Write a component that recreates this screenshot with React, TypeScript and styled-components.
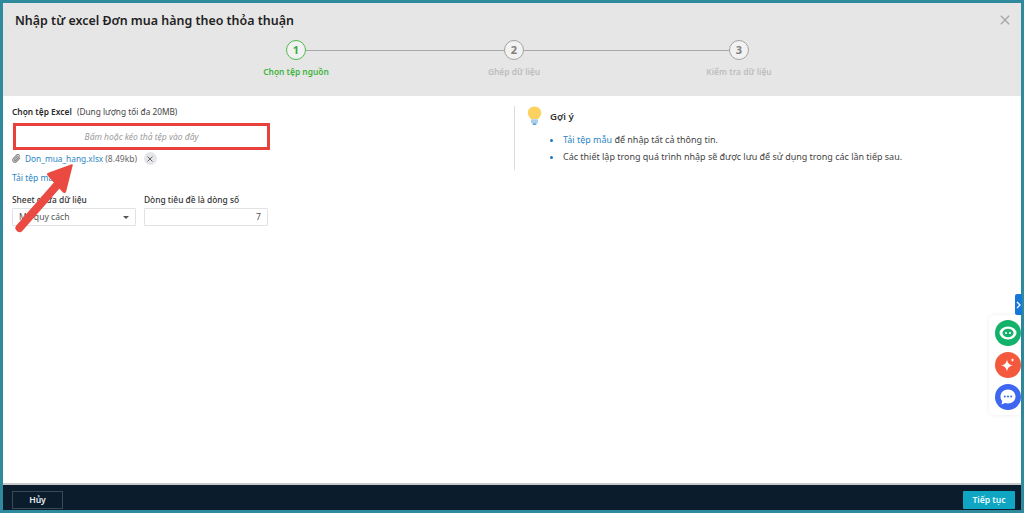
import React from 'react';
import styled, { createGlobalStyle } from 'styled-components';

const GlobalStyle = createGlobalStyle`
  html, body { margin: 0; padding: 0; background: #2f8a9d; }
  * { box-sizing: border-box; }
`;

const Frame = styled.div`
  position: relative;
  width: 1024px;
  height: 513px;
  padding: 3px 3px 3px 3px;
  overflow: hidden;
  display: flex;
  flex-direction: column;
  background: #2f8a9d;
  font-family: 'Noto Sans', 'Open Sans', sans-serif;
  color: #333;
`;

const Header = styled.header`
  position: relative;
  height: 93px;
  flex: none;
  background: #e6e6e6;
  padding: 9px 12px 0;
`;

const Title = styled.h1`
  margin: 0;
  font-size: 12.45px;
  line-height: 18px;
  font-weight: 600;
  color: #1f1f1f;
`;

const CloseBtn = styled.button`
  position: absolute;
  top: 12px;
  right: 11px;
  width: 10px;
  height: 10px;
  padding: 0;
  border: 0;
  background: none;
  display: flex;
`;

const Stepper = styled.div`
  display: flex;
  margin: 10px 0 0 271px;
`;

const Step = styled.div`
  width: 20px;
  flex: none;
  display: flex;
  flex-direction: column;
  align-items: center;
`;

const StepCircle = styled.div<{ $active?: boolean }>`
  width: 20px;
  height: 20px;
  border-radius: 50%;
  background: #f2f2f2;
  border: 1px solid ${(p) => (p.$active ? '#4cbb4c' : '#a3a3a3')};
  color: ${(p) => (p.$active ? '#3fae3f' : '#808080')};
  font-size: 11px;
  font-weight: 700;
  line-height: 18px;
  text-align: center;
`;

const StepLabel = styled.div<{ $active?: boolean }>`
  margin-top: 5px;
  white-space: nowrap;
  font-size: 8.4px;
  line-height: 13px;
  font-weight: 600;
  color: ${(p) => (p.$active ? '#3fb53f' : '#bdbdbd')};
`;

const StepLine = styled.div<{ $width: number }>`
  width: ${(p) => p.$width}px;
  height: 1px;
  margin-top: 9.5px;
  background: #a8a8a8;
  flex: none;
`;

const Body = styled.main`
  flex: 1;
  background: #fff;
  display: flex;
  min-height: 0;
`;

const LeftCol = styled.section`
  width: 511px;
  flex: none;
  padding: 9px 0 0 9px;
`;

const UploadLabel = styled.div`
  font-size: 8.3px;
  line-height: 13px;
  color: #444;
`;

const Strong = styled.span`
  font-weight: 600;
  font-size: 8.4px;
  color: #2b2b2b;
  margin-right: 3px;
`;

const DropZone = styled.div`
  width: 257px;
  height: 27px;
  margin: 5px 0 0 1px;
  border: 3px solid #e8413c;
  font-size: 8.5px;
  font-style: italic;
  color: #9a9a9a;
  display: flex;
  align-items: center;
  justify-content: center;
`;

const FileRow = styled.div`
  display: flex;
  align-items: center;
  height: 13px;
  margin-top: 2px;
  font-size: 8.5px;
  color: #666;
`;

const FileLink = styled.a`
  color: #2a86c4;
  margin: 0 2px 0 4px;
  font-size: 8.3px;
`;

const RemoveBtn = styled.button`
  width: 13px;
  height: 13px;
  padding: 0;
  margin-left: 7px;
  border: 0;
  border-radius: 50%;
  background: #e4e6ea;
  display: flex;
  align-items: center;
  justify-content: center;
`;

const TemplateLink = styled.a`
  display: block;
  margin-top: 6px;
  font-size: 8.5px;
  line-height: 13px;
  color: #2a86c4;
`;

const FieldRow = styled.div`
  display: flex;
  gap: 8px;
  margin-top: 10px;
`;

const Field = styled.div`
  width: 124px;
`;

const FieldLabel = styled.div`
  font-size: 8.4px;
  line-height: 12px;
  font-weight: 500;
  color: #333;
  margin-bottom: 2px;
`;

const InputBox = styled.div<{ $right?: boolean }>`
  height: 18px;
  border: 1px solid #dfe3e6;
  border-radius: 1px;
  background: #fff;
  font-size: 8.6px;
  color: #555;
  display: flex;
  align-items: center;
  justify-content: ${(p) => (p.$right ? 'flex-end' : 'space-between')};
  padding: 0 6px;
`;

const Caret = styled.span`
  width: 0;
  height: 0;
  border-left: 3px solid transparent;
  border-right: 3px solid transparent;
  border-top: 3px solid #555;
`;

const RightCol = styled.aside`
  margin-top: 10px;
  height: 64px;
  flex: 1;
  border-left: 1px solid #dcdcdc;
  padding-left: 12px;
`;

const HintHead = styled.div`
  display: flex;
  align-items: center;
  gap: 8px;
  height: 20px;
`;

const HintTitle = styled.div`
  font-size: 9.6px;
  font-weight: 600;
  color: #333;
`;

const HintList = styled.ul`
  margin: 5px 0 0;
  padding: 0 0 0 36px;
  font-size: 8.97px;
  line-height: 17px;
  color: #444;

  li::marker {
    color: #1f78c1;
  }
`;

const HintLink = styled.a`
  color: #2a86c4;
`;

const Footer = styled.footer`
  height: 27px;
  flex: none;
  background: #0b1d2d;
  border-top: 2px solid #c9c9c9;
  display: flex;
  justify-content: space-between;
  align-items: center;
  padding: 0 6px 0 9px;
`;

const CancelBtn = styled.button`
  width: 51px;
  height: 18px;
  padding: 0;
  margin-top: 4px;
  background: transparent;
  border: 1px solid #3b4956;
  color: #e8edf2;
  font-family: inherit;
  font-size: 8.6px;
  font-weight: 600;
`;

const NextBtn = styled.button`
  width: 52px;
  height: 18px;
  padding: 0;
  margin-top: 4px;
  background: #0fa6c4;
  border: 0;
  border-radius: 1px;
  color: #e9fbff;
  font-family: inherit;
  font-size: 8.6px;
  font-weight: 600;
`;

const ArrowOverlay = styled.svg`
  position: absolute;
  left: 0;
  top: 150px;
  pointer-events: none;
`;

const WidgetTab = styled.div`
  position: absolute;
  right: 2px;
  top: 294px;
  width: 7px;
  height: 21px;
  border-radius: 2px 0 0 2px;
  background: #1677d9;
  display: flex;
  align-items: center;
  justify-content: center;
`;

const WidgetPanel = styled.div`
  position: absolute;
  top: 315px;
  left: 989px;
  width: 32px;
  height: 100px;
  border-radius: 6px 0 0 6px;
  background: #fff;
  box-shadow: 0 0 4px rgba(0, 0, 0, 0.08);
  display: flex;
  flex-direction: column;
  align-items: center;
  gap: 6px;
  padding: 5px 0 0 6px;
`;

const WidgetBtn = styled.div<{ $bg: string }>`
  width: 26px;
  height: 26px;
  border-radius: 50%;
  background: ${(p) => p.$bg};
  display: flex;
  align-items: center;
  justify-content: center;
  flex: none;
`;

const Bulb = () => (
  <svg width="15" height="20" viewBox="0 0 15 20">
    <path d="M7.5 0.5C3.6 0.5.8 3.4.8 6.9c0 2.8 2 4.2 2.9 6.2h7.6c.9-2 2.9-3.4 2.9-6.2C14.2 3.4 11.4.5 7.5.5z" fill="#fbd25f" />
    <rect x="4" y="13.2" width="7" height="4" rx="1" fill="#a9cdea" />
    <rect x="5.4" y="17.2" width="4.2" height="1.8" rx=".9" fill="#5da2d8" />
  </svg>
);

const Paperclip = () => (
  <svg width="9" height="9" viewBox="0 0 24 24" fill="none" stroke="#8a8a8a" strokeWidth="3" strokeLinecap="round">
    <path d="M21 11l-9 9a6 6 0 0 1-8.5-8.5l9.2-9.2a4 4 0 0 1 5.7 5.7l-9.2 9.2a2 2 0 0 1-2.8-2.8l8.5-8.5" />
  </svg>
);

const XMark = ({ size, color, width }: { size: number; color: string; width: number }) => (
  <svg width={size} height={size} viewBox="0 0 12 12" stroke={color} strokeWidth={width} fill="none">
    <path d="M1 1l10 10M11 1L1 11" />
  </svg>
);

const App: React.FC = () => (
  <Frame>
    <GlobalStyle />
    <Header>
      <Title>Nhập từ excel Đơn mua hàng theo thỏa thuận</Title>
      <CloseBtn>
        <XMark size={10} color="#a6a6a6" width={1.6} />
      </CloseBtn>
      <Stepper>
        <Step>
          <StepCircle $active>1</StepCircle>
          <StepLabel $active>Chọn tệp nguồn</StepLabel>
        </Step>
        <StepLine $width={198} />
        <Step>
          <StepCircle>2</StepCircle>
          <StepLabel>Ghép dữ liệu</StepLabel>
        </Step>
        <StepLine $width={205} />
        <Step>
          <StepCircle>3</StepCircle>
          <StepLabel>Kiểm tra dữ liệu</StepLabel>
        </Step>
      </Stepper>
    </Header>

    <Body>
      <LeftCol>
        <UploadLabel>
          <Strong>Chọn tệp Excel</Strong> (Dung lượng tối đa 20MB)
        </UploadLabel>
        <DropZone>Bấm hoặc kéo thả tệp vào đây</DropZone>
        <FileRow>
          <Paperclip />
          <FileLink>Don_mua_hang.xlsx</FileLink>
          (8.49kb)
          <RemoveBtn>
            <XMark size={6} color="#555" width={1.8} />
          </RemoveBtn>
        </FileRow>
        <TemplateLink>Tải tệp mẫu</TemplateLink>
        <FieldRow>
          <Field>
            <FieldLabel>Sheet chứa dữ liệu</FieldLabel>
            <InputBox>
              Mã quy cách
              <Caret />
            </InputBox>
          </Field>
          <Field>
            <FieldLabel>Dòng tiêu đề là dòng số</FieldLabel>
            <InputBox $right>7</InputBox>
          </Field>
        </FieldRow>
      </LeftCol>
      <RightCol>
        <HintHead>
          <Bulb />
          <HintTitle>Gợi ý</HintTitle>
        </HintHead>
        <HintList>
          <li>
            <HintLink>Tải tệp mẫu</HintLink> để nhập tất cả thông tin.
          </li>
          <li>Các thiết lập trong quá trình nhập sẽ được lưu để sử dụng trong các lần tiếp sau.</li>
        </HintList>
      </RightCol>
    </Body>

    <Footer>
      <CancelBtn>Hủy</CancelBtn>
      <NextBtn>Tiếp tục</NextBtn>
    </Footer>

    {/* red annotation arrow drawn over the form */}
    <ArrowOverlay width="90" height="90" viewBox="0 0 90 90">
      <path d="M19.5 78L58 34" stroke="#ea4a41" strokeWidth="8" strokeLinecap="round" />
      <path d="M72 15L48.5 23.5Q47 24 48.5 25.5L63.5 42Q65 43 65.5 41z" fill="#ea4a41" stroke="#ea4a41" strokeWidth="1.5" strokeLinejoin="round" />
    </ArrowOverlay>

    <WidgetTab>
      <svg width="5" height="8" viewBox="0 0 5 8" fill="none" stroke="#fff" strokeWidth="1.3">
        <path d="M1 1l3 3-3 3" />
      </svg>
    </WidgetTab>
    <WidgetPanel>
      <WidgetBtn $bg="#12b26b">
        <svg width="18" height="14" viewBox="0 0 18 14">
          <ellipse cx="9" cy="7" rx="8.5" ry="6.5" fill="#fff" />
          <ellipse cx="9" cy="7" rx="5.5" ry="4.2" fill="#12b26b" />
          <circle cx="7" cy="7" r="1.1" fill="#fff" />
          <circle cx="11" cy="7" r="1.1" fill="#fff" />
        </svg>
      </WidgetBtn>
      <WidgetBtn $bg="#f4593d">
        <svg width="16" height="16" viewBox="0 0 16 16" fill="#fff">
          <path d="M7 2.5C7.6 6 9 7.6 13 8.5 9 9.4 7.6 11 7 14.5 6.4 11 5 9.4 1 8.5 5 7.6 6.4 6 7 2.5z" />
          <path d="M12.5 1c.2 1.2.7 1.7 1.9 2-1.2.3-1.7.8-1.9 2-.2-1.2-.7-1.7-1.9-2 1.2-.3 1.7-.8 1.9-2z" />
        </svg>
      </WidgetBtn>
      <WidgetBtn $bg="#3f66f1">
        <svg width="18" height="18" viewBox="0 0 18 18">
          <path d="M9 1.5c4.4 0 7.500 3 7.500 7s-3.100 7-7.500 7c-1 0-2-.2-2.900-.5L2.500 16.500l.7-3.600C2 11.700 1.500 10.200 1.500 8.500c0-4 3.100-7 7.500-7z" fill="#fff" />
          <circle cx="5.800" cy="8.500" r="1" fill="#3f66f1" />
          <circle cx="9" cy="8.500" r="1" fill="#3f66f1" />
          <circle cx="12.200" cy="8.500" r="1" fill="#3f66f1" />
        </svg>
      </WidgetBtn>
    </WidgetPanel>
  </Frame>
);

export default App;
